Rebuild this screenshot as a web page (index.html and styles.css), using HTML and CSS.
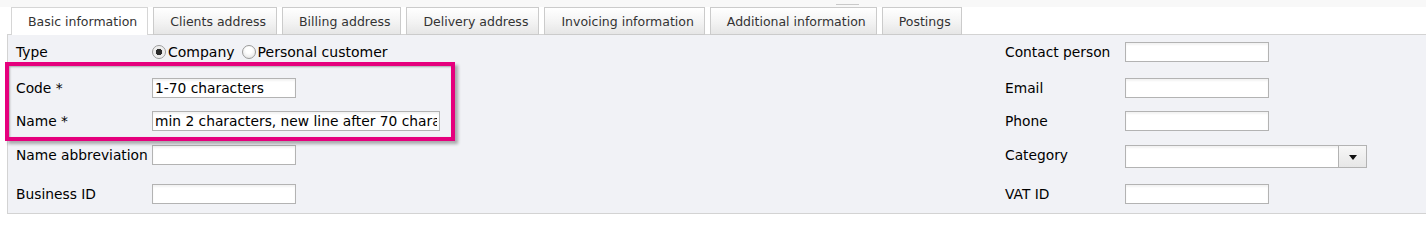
FILE: index.html
```html
<!DOCTYPE html>
<html lang="en">
<head>
<meta charset="utf-8">
<title>Customer</title>
<link rel="stylesheet" href="styles.css">
</head>
<body>
<div class="topbar"><div class="grip"></div></div>
<div class="tabs">
  <div class="tab active">Basic information</div>
  <div class="tab">Clients address</div>
  <div class="tab">Billing address</div>
  <div class="tab">Delivery address</div>
  <div class="tab">Invoicing information</div>
  <div class="tab">Additional information</div>
  <div class="tab">Postings</div>
</div>
<div class="panel">
  <div class="form">
    <div class="label">Type</div>
    <div class="radios">
      <input type="radio" name="type" class="radio" checked>
      <span class="radio-text">Company</span>
      <input type="radio" name="type" class="radio second">
      <span class="radio-text">Personal customer</span>
    </div>
    <div class="label">Contact person</div>
    <div><input class="field" type="text"></div>

    <div class="label">Code *</div>
    <div><input class="field" type="text" value="1-70 characters"></div>
    <div class="label">Email</div>
    <div><input class="field" type="text"></div>

    <div class="label">Name *</div>
    <div><input class="field wide" type="text" value="min 2 characters, new line after 70 characters"></div>
    <div class="label">Phone</div>
    <div><input class="field" type="text"></div>

    <div class="label">Name abbreviation</div>
    <div><input class="field" type="text"></div>
    <div class="label">Category</div>
    <div class="select"><div class="select-value"></div><div class="select-btn"><span class="caret"></span></div></div>

    <div class="label">Business ID</div>
    <div><input class="field" type="text"></div>
    <div class="label">VAT ID</div>
    <div><input class="field" type="text"></div>
  </div>
  <div class="highlight"></div>
</div>
</body>
</html>
```
FILE: styles.css
```css
html, body {
  margin: 0;
  padding: 0;
  background: #ffffff;
  font-family: "DejaVu Sans", "Liberation Sans", sans-serif;
  color: #000;
}

.topbar {
  height: 7px;
  box-sizing: border-box;
  padding-top: 4px;
  background: #f8f8f8;
}

.grip {
  margin-left: 836px;
  width: 23px;
  height: 1px;
  background: #c9c9c9;
}

.tabs {
  display: flex;
  align-items: flex-start;
  gap: 5px;
  padding-left: 11px;
  height: 28px;
  position: relative;
  z-index: 1;
}

.tab {
  box-sizing: border-box;
  height: 28px;
  padding: 0 10px 0 16px;
  border: 1px solid #cbcbcb;
  background: linear-gradient(#ffffff, #f3f3f3 55%, #e6e6e6);
  font-size: 12.5px;
  line-height: 27px;
  color: #333;
  white-space: nowrap;
}

.tab.active {
  border-color: #d6d6d6;
  border-bottom: none;
  background: #ffffff;
}

.panel {
  position: relative;
  margin-top: -1px;
  margin-left: 7px;
  border: 1px solid #d3d3d3;
  border-right: none;
  background: #f1f2f6;
  padding: 7px 0 9px 8px;
}

.form {
  display: grid;
  grid-template-columns: 136px 853px 120px auto;
  grid-template-rows: 36px 33px 34px 39px 20px;
  align-items: start;
}

.label {
  height: 20px;
  line-height: 20px;
  font-size: 13.8px;
  white-space: nowrap;
}

.radios {
  display: flex;
  align-items: center;
  height: 20px;
  font-size: 14px;
}

.radio {
  appearance: none;
  -webkit-appearance: none;
  margin: 0;
  width: 14px;
  height: 14px;
  box-sizing: border-box;
  border-radius: 50%;
  border: 1px solid #9a9a9a;
  background: radial-gradient(circle at 50% 35%, #ffffff 30%, #dedede 100%);
  position: relative;
}

.radio:checked {
  background: radial-gradient(circle, #2b2b2b 0, #2b2b2b 3px, #e8e8e8 3.5px, #ffffff 100%);
}

.radio.second {
  margin-left: 7px;
}

.radio-text {
  margin-left: 2px;
}

.field {
  display: block;
  box-sizing: border-box;
  width: 144px;
  height: 20px;
  margin: 0;
  padding: 0 2px;
  border: 1px solid #b3b3b3;
  border-radius: 0;
  background: #fff;
  box-shadow: inset 0 2px 2px rgba(0, 0, 0, 0.05);
  font-family: "DejaVu Sans", "Liberation Sans", sans-serif;
  font-size: 13.8px;
  color: #000;
  outline: none;
}

.field.wide {
  width: 288px;
}

.select {
  display: flex;
  box-sizing: border-box;
  width: 242px;
  height: 23px;
  border: 1px solid #b3b3b3;
  background: #fff;
  box-shadow: inset 0 2px 2px rgba(0, 0, 0, 0.05);
}

.select-value {
  flex: 1;
}

.select-btn {
  width: 27px;
  border-left: 1px solid #b3b3b3;
  background: linear-gradient(#f7f7f7, #e7e7e7);
  display: flex;
  align-items: center;
  justify-content: center;
}

.caret {
  width: 0;
  height: 0;
  border-left: 4px solid transparent;
  border-right: 4px solid transparent;
  border-top: 5px solid #111;
  margin-top: 1px;
}

.highlight {
  position: absolute;
  left: -3px;
  top: 27px;
  width: 450px;
  height: 79px;
  box-sizing: border-box;
  border: 4px solid #e5007d;
  box-shadow: 3px 3px 3px rgba(0, 0, 0, 0.3), inset 1px 1px 2px rgba(0, 0, 0, 0.3);
  pointer-events: none;
}
```
